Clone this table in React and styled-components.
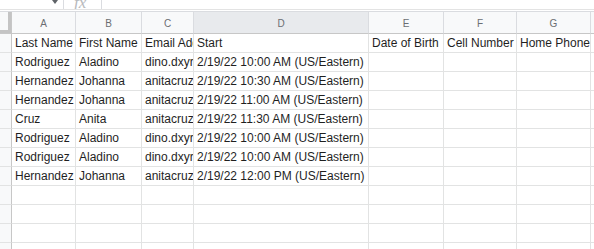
import React from "react";
import styled, { createGlobalStyle } from "styled-components";

const Global = createGlobalStyle`
  html, body { margin: 0; padding: 0; background: #fff; overflow: hidden; }
  body { font-family: "Liberation Sans", Arial, sans-serif; }
`;

const Page = styled.div`
  width: 594px;
  height: 249px;
  overflow: hidden;
  background: #fff;
`;

const FormulaBar = styled.div`
  height: 9px;
  border-bottom: 1px solid #e3e3e3;
  display: flex;
  align-items: flex-end;
  overflow: hidden;
  margin-bottom: 1px;
`;

const NameBox = styled.div`
  width: 64px;
  height: 9px;
  display: flex;
  justify-content: flex-end;
  align-items: flex-end;
  border-right: 1px solid #dadce0;
  box-sizing: border-box;
  padding-right: 5px;
`;

const Caret = styled.span`
  display: block;
  width: 0;
  height: 0;
  border-left: 3px solid transparent;
  border-right: 3px solid transparent;
  border-top: 4px solid #5f6368;
  margin-bottom: 5px;
`;

const FxBox = styled.div`
  width: 38px;
  height: 9px;
  border-right: 1px solid #dadce0;
  box-sizing: border-box;
  position: relative;
  overflow: hidden;
`;

const Fx = styled.span`
  position: absolute;
  left: 10px;
  bottom: -2px;
  font-family: "Liberation Serif", "Times New Roman", serif;
  font-style: italic;
  font-size: 17px;
  line-height: 17px;
  color: #b7b9bc;
`;

const Grid = styled.div`
  display: grid;
  grid-template-columns: 12px 64px 66px 52px 175px 75px 73px 74px 1fr;
  grid-template-rows: 22px;
  grid-auto-rows: 19px;
  border-top: 1px solid #dadce0;
`;

const Corner = styled.div`
  background: #f8f9fa;
  box-sizing: border-box;
  border-right: 1px solid #c7c7c7;
  border-bottom: 1px solid #c7c7c7;
  box-shadow: inset -3px -3px 0 #c4c4c4;
`;

const ColumnHeader = styled.div`
  background: ${(p) => (p.$selected ? "#e8eaed" : "#f8f9fa")};
  box-sizing: border-box;
  border-right: 1px solid #dadce0;
  border-bottom: 1px solid #c7c7c7;
  color: #6b6e72;
  font-size: 10px;
  display: flex;
  align-items: center;
  justify-content: center;
  padding-top: 1px;
`;

const RowHeader = styled.div`
  background: #f8f9fa;
  box-sizing: border-box;
  border-right: 1px solid #c7c7c7;
  border-bottom: 1px solid #e2e3e3;
`;

const Cell = styled.div`
  box-sizing: border-box;
  border-right: 1px solid #e2e3e3;
  border-bottom: 1px solid #e2e3e3;
  font-size: 12px;
  line-height: 18px;
  color: #1f1f1f;
  padding-left: 3px;
  white-space: nowrap;
  overflow: hidden;
`;

const Filler = styled.div`
  box-sizing: border-box;
  border-bottom: 1px solid ${(p) => (p.$header ? "#c7c7c7" : "#e2e3e3")};
  background: ${(p) => (p.$header ? "#f8f9fa" : "#fff")};
`;

const letters = ["A", "B", "C", "D", "E", "F", "G"];

const rows = [
  ["Last Name", "First Name", "Email Address", "Start", "Date of Birth", "Cell Number", "Home Phone"],
  ["Rodriguez", "Aladino", "dino.dxyrz@gmail.com", "2/19/22 10:00 AM (US/Eastern)", "", "", ""],
  ["Hernandez", "Johanna", "anitacruz@gmail.com", "2/19/22 10:30 AM (US/Eastern)", "", "", ""],
  ["Hernandez", "Johanna", "anitacruz@gmail.com", "2/19/22 11:00 AM (US/Eastern)", "", "", ""],
  ["Cruz", "Anita", "anitacruz@gmail.com", "2/19/22 11:30 AM (US/Eastern)", "", "", ""],
  ["Rodriguez", "Aladino", "dino.dxyrz@gmail.com", "2/19/22 10:00 AM (US/Eastern)", "", "", ""],
  ["Rodriguez", "Aladino", "dino.dxyrz@gmail.com", "2/19/22 10:00 AM (US/Eastern)", "", "", ""],
  ["Hernandez", "Johanna", "anitacruz@gmail.com", "2/19/22 12:00 PM (US/Eastern)", "", "", ""],
  ["", "", "", "", "", "", ""],
  ["", "", "", "", "", "", ""],
  ["", "", "", "", "", "", ""],
  ["", "", "", "", "", "", ""],
];

export default function App() {
  return (
    <Page>
      <Global />
      <FormulaBar>
        <NameBox>
          <Caret />
        </NameBox>
        <FxBox>
          <Fx>fx</Fx>
        </FxBox>
      </FormulaBar>
      <Grid>
        <Corner />
        {letters.map((l) => (
          <ColumnHeader key={l} $selected={l === "D"}>
            {l}
          </ColumnHeader>
        ))}
        <Filler $header />
        {rows.map((r, i) => (
          <React.Fragment key={i}>
            <RowHeader />
            {r.map((c, j) => (
              <Cell key={j}>{c}</Cell>
            ))}
            <Filler />
          </React.Fragment>
        ))}
      </Grid>
    </Page>
  );
}
